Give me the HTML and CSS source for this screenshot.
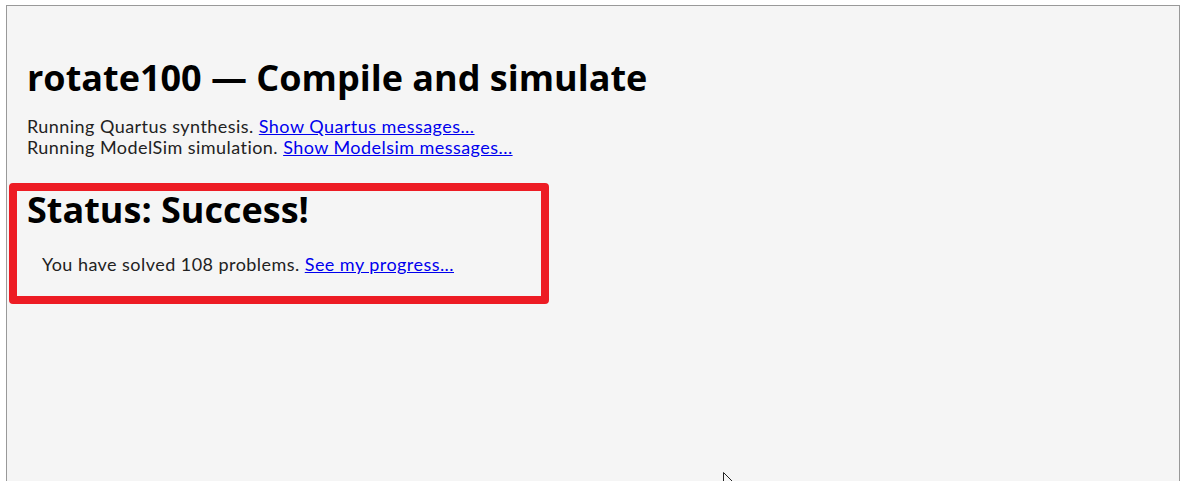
FILE: index.html
```html
<!DOCTYPE html>
<html>
<head>
<meta charset="utf-8">
<link rel="stylesheet" href="styles.css">
</head>
<body>
<div class="frame">
  <h1 class="title">rotate100 — Compile and simulate</h1>
  <div class="log">
    <div>Running Quartus synthesis. <a href="#">Show Quartus messages...</a></div>
    <div>Running ModelSim simulation. <a href="#">Show Modelsim messages...</a></div>
  </div>
  <div class="status">
    <h2 class="status-title">Status: Success!</h2>
    <p class="solved">You have solved 108 problems. <a href="#">See my progress...</a></p>
  </div>
</div>
<svg class="cursor" width="12" height="12" viewBox="0 0 12 12"><path d="M0.5 0.5 L0.5 12 M0.5 0.5 L10 10" stroke="#222" stroke-width="1" fill="none"/></svg>
</body>
</html>
```
FILE: styles.css
```css
html, body {
  margin: 0;
  padding: 0;
  background: #ffffff;
  overflow: hidden;
}
body {
  height: 481px;
  position: relative;
}
.frame {
  margin: 5px 0 0 6px;
  width: 1174px;
  height: 500px;
  border: 1px solid #999999;
  background: #f5f5f5;
  padding: 48px 20px 0;
  box-sizing: border-box;
  font-family: "Lato", "Open Sans", sans-serif;
  color: #222;
}
.title {
  font-family: "Open Sans", sans-serif;
  font-weight: 700;
  font-size: 36px;
  line-height: 48px;
  margin: 0;
  color: #000;
}
.log {
  margin-top: 14px;
  font-size: 18px;
  line-height: 21px;
  letter-spacing: 0.45px;
}
a {
  color: #0000ee;
  text-decoration: underline;
}
.status {
  margin: 25px 0 0 -18px;
  width: 540px;
  height: 121px;
  box-sizing: border-box;
  border: 8px solid #ed1c24;
  border-radius: 4px;
  padding: 1px 0 0 10px;
}
.status-title {
  font-family: "Open Sans", sans-serif;
  font-weight: 700;
  font-size: 36px;
  line-height: 36px;
  margin: 0;
  color: #000;
}
.solved {
  margin: 26px 0 0 15px;
  font-size: 18px;
  line-height: 21px;
  letter-spacing: 0.45px;
}
.cursor {
  position: absolute;
  left: 723px;
  top: 472px;
}
```
